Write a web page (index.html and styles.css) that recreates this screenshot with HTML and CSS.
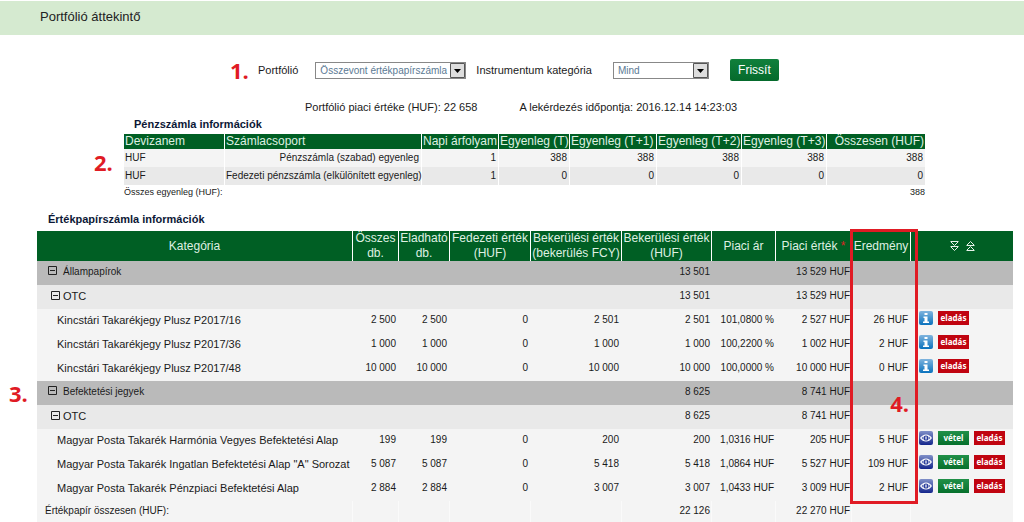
FILE: index.html
```
<!DOCTYPE html>
<html lang="hu">
<head>
<meta charset="utf-8">
<title>Portfólió áttekintő</title>
<link rel="stylesheet" href="styles.css">
</head>
<body>
<svg class="defs" aria-hidden="true">
  <defs>
    <linearGradient id="sky" x1="0" y1="0" x2="0" y2="1"><stop offset="0" stop-color="#7fb4de"/><stop offset="1" stop-color="#0a72bd"/></linearGradient>
    <linearGradient id="navy" x1="0" y1="0" x2="0" y2="1"><stop offset="0" stop-color="#8090c8"/><stop offset="1" stop-color="#14268c"/></linearGradient>
    <symbol id="info" viewBox="0 0 14 14"><rect width="14" height="14" rx="2" fill="url(#sky)"/><path d="M5.500 2h3v2h-3zM4.500 5.500h4v5h1.500v1.500h-6v-1.500h1.500v-3.500h-1z" fill="#fff"/></symbol>
    <symbol id="eye" viewBox="0 0 14 14"><rect width="14" height="14" rx="2" fill="url(#navy)"/><path d="M1 7q2.500-3.500 6-3.500T13 7q-2.500 3.500-6 3.500T1 7z" fill="#fff"/><circle cx="7" cy="7" r="2.600" fill="#2c3f9c"/><path d="M6.400 5.500h1.200v3h-1.200z" fill="#fff"/><path d="M2.500 7l1.500-1.500v3zM11.500 7l-1.500-1.500v3z" fill="#6474b8"/></symbol>
    <symbol id="minus" viewBox="0 0 9 9"><path d="M.5.5h8v8h-8zM2 4.500h5" fill="none" stroke="#222"/></symbol>
    <symbol id="down" viewBox="0 0 9 10"><path d="M.5.500h8M1 1l3.500 3.500L8 1M.5 5.500h8M1 6l3.500 3.500L8 6" fill="none" stroke="#e8f3ea"/></symbol>
  </defs>
</svg>
<header class="page-head"><h1>Portfólió áttekintő</h1></header>
<main>
  <form class="filters">
    <span class="mark">1.</span>
    <label for="pf">Portfólió</label>
    <span class="pick pick-a"><select id="pf"><option>Összevont értékpapírszámla</option></select><svg viewBox="0 0 15 15"><path d="M.5.500h14v14H.5z" fill="#ddd" stroke="#555"/><path d="M4 6h7l-3.500 4z" fill="#000"/></svg></span>
    <label for="cat">Instrumentum kategória</label>
    <span class="pick pick-b"><select id="cat"><option>Mind</option></select><svg viewBox="0 0 15 15"><path d="M.5.500h14v14H.5z" fill="#ddd" stroke="#555"/><path d="M4 6h7l-3.500 4z" fill="#000"/></svg></span>
    <button type="button" class="refresh">Frissít</button>
  </form>
  <p class="summary"><span>Portfólió piaci értéke (HUF): 22 658</span><span>A lekérdezés időpontja: 2016.12.14 14:23:03</span></p>

  <section class="cash">
    <h2>Pénzszámla információk</h2>
    <span class="mark mark-2">2.</span>
    <table>
      <colgroup><col class="c100"><col><col class="c77"><col class="c71"><col class="c87"><col class="c85"><col class="c85"><col class="c99"></colgroup>
      <thead><tr><th>Devizanem</th><th>Számlacsoport</th><th>Napi árfolyam</th><th>Egyenleg (T)</th><th>Egyenleg (T+1)</th><th>Egyenleg (T+2)</th><th>Egyenleg (T+3)</th><th class="right">Összesen (HUF)</th></tr></thead>
      <tbody>
        <tr><td>HUF</td><td>Pénzszámla (szabad) egyenleg</td><td>1</td><td>388</td><td>388</td><td>388</td><td>388</td><td>388</td></tr>
        <tr class="alt"><td>HUF</td><td>Fedezeti pénzszámla (elkülönített egyenleg)</td><td>1</td><td>0</td><td>0</td><td>0</td><td>0</td><td>0</td></tr>
      </tbody>
      <tfoot><tr><td colspan="7">Összes egyenleg (HUF):</td><td>388</td></tr></tfoot>
    </table>
  </section>

  <section class="stock">
    <h2>Értékpapírszámla információk</h2>
    <span class="mark mark-3">3.</span>
    <div class="grid">
    <table>
      <colgroup><col><col class="c46"><col class="c51"><col class="c81"><col class="c91"><col class="c90"><col class="c64"><col class="c76"><col class="c59"><col class="c103"></colgroup>
      <thead><tr><th>Kategória</th><th>Összes<br>db.</th><th>Eladható<br>db.</th><th>Fedezeti érték<br>(HUF)</th><th>Bekerülési érték<br>(bekerülés FCY)</th><th>Bekerülési érték<br>(HUF)</th><th>Piaci ár</th><th>Piaci érték <span class="star">*</span></th><th>Eredmény</th><th><span class="sorts"><svg><use href="#down"/></svg><svg class="up"><use href="#down"/></svg></span></th></tr></thead>
      <tbody>
        <tr class="group"><td><button type="button" aria-label="Állampapírok bezárása"><svg><use href="#minus"/></svg></button>Állampapírok</td><td></td><td></td><td></td><td></td><td>13 501</td><td></td><td>13 529 HUF</td><td></td><td></td></tr>
        <tr class="sub"><td><button type="button" aria-label="OTC bezárása"><svg><use href="#minus"/></svg></button>OTC</td><td></td><td></td><td></td><td></td><td>13 501</td><td></td><td>13 529 HUF</td><td></td><td></td></tr>
        <tr><td>Kincstári Takarékjegy Plusz P2017/16</td><td>2 500</td><td>2 500</td><td>0</td><td>2 501</td><td>2 501</td><td>101,0800 %</td><td>2 527 HUF</td><td>26 HUF</td><td><div class="acts"><button type="button" class="ico" aria-label="Információ"><svg><use href="#info"/></svg></button><button type="button" class="sell">eladás</button></div></td></tr>
        <tr><td>Kincstári Takarékjegy Plusz P2017/36</td><td>1 000</td><td>1 000</td><td>0</td><td>1 000</td><td>1 000</td><td>100,2200 %</td><td>1 002 HUF</td><td>2 HUF</td><td><div class="acts"><button type="button" class="ico" aria-label="Információ"><svg><use href="#info"/></svg></button><button type="button" class="sell">eladás</button></div></td></tr>
        <tr><td>Kincstári Takarékjegy Plusz P2017/48</td><td>10 000</td><td>10 000</td><td>0</td><td>10 000</td><td>10 000</td><td>100,0000 %</td><td>10 000 HUF</td><td>0 HUF</td><td><div class="acts"><button type="button" class="ico" aria-label="Információ"><svg><use href="#info"/></svg></button><button type="button" class="sell">eladás</button></div></td></tr>
        <tr class="group"><td><button type="button" aria-label="Befektetési jegyek bezárása"><svg><use href="#minus"/></svg></button>Befektetési jegyek</td><td></td><td></td><td></td><td></td><td>8 625</td><td></td><td>8 741 HUF</td><td></td><td></td></tr>
        <tr class="sub"><td><button type="button" aria-label="OTC bezárása"><svg><use href="#minus"/></svg></button>OTC</td><td></td><td></td><td></td><td></td><td>8 625</td><td></td><td>8 741 HUF</td><td></td><td></td></tr>
        <tr><td>Magyar Posta Takarék Harmónia Vegyes Befektetési Alap</td><td>199</td><td>199</td><td>0</td><td>200</td><td>200</td><td>1,0316 HUF</td><td>205 HUF</td><td>5 HUF</td><td><div class="acts"><button type="button" class="ico" aria-label="Megtekintés"><svg><use href="#eye"/></svg></button><button type="button" class="buy">vétel</button><button type="button" class="sell">eladás</button></div></td></tr>
        <tr><td>Magyar Posta Takarék Ingatlan Befektetési Alap "A" Sorozat</td><td>5 087</td><td>5 087</td><td>0</td><td>5 418</td><td>5 418</td><td>1,0864 HUF</td><td>5 527 HUF</td><td>109 HUF</td><td><div class="acts"><button type="button" class="ico" aria-label="Megtekintés"><svg><use href="#eye"/></svg></button><button type="button" class="buy">vétel</button><button type="button" class="sell">eladás</button></div></td></tr>
        <tr><td>Magyar Posta Takarék Pénzpiaci Befektetési Alap</td><td>2 884</td><td>2 884</td><td>0</td><td>3 007</td><td>3 007</td><td>1,0433 HUF</td><td>3 009 HUF</td><td>2 HUF</td><td><div class="acts"><button type="button" class="ico" aria-label="Megtekintés"><svg><use href="#eye"/></svg></button><button type="button" class="buy">vétel</button><button type="button" class="sell">eladás</button></div></td></tr>
      </tbody>
      <tfoot><tr><td>Értékpapír összesen (HUF):</td><td></td><td></td><td></td><td></td><td>22 126</td><td></td><td>22 270 HUF</td><td></td><td></td></tr></tfoot>
    </table>
    <div class="frame"><span class="mark">4.</span></div>
    </div>
  </section>
</main>
</body>
</html>
```
FILE: styles.css
```
* { box-sizing: border-box; }
body { margin: 0; background: #fff; color: #1a1a1a; font: 11px/16px "Liberation Sans", Arial, sans-serif; }
.defs { position: absolute; width: 0; height: 0; }
button { border: 0; padding: 0; margin: 0; background: none; font: inherit; cursor: pointer; }
svg { display: block; }
h1, h2, p { margin: 0; }

.page-head { margin-top: 1px; height: 34px; padding: 8px 40px; background: #d5ead0; }
h1 { font-size: 13px; line-height: 16px; font-weight: normal; color: #222; }
h2 { font-size: 11px; line-height: 14px; color: #0c1836; }
.mark { color: #e01b24; font: bold 22px/24px "Open Sans", sans-serif; }

.filters { display: flex; align-items: center; height: 24px; margin: 23px 0 0 230px; }
.filters .mark { width: 28px; }
.pick { display: grid; align-items: center; }
.pick-a { width: 151px; margin: 0 10px 0 17px; }
.pick-b { width: 96px; margin: 0 21px; }
.pick select, .pick svg { grid-area: 1 / 1; }
.pick svg { width: 15px; height: 15px; margin-right: 1px; justify-self: end; pointer-events: none; }
.pick select { appearance: none; width: 100%; height: 17px; padding: 0 16px 0 4px; border: 1px solid #888; border-radius: 0; background: #fff; color: #5b7a94; font: 10px/15px "Liberation Sans", Arial, sans-serif; }
.refresh { width: 49px; height: 22px; border-radius: 2px; background: linear-gradient(#10803c, #056a2c); color: #fff; font-size: 12px; }

.summary { display: flex; gap: 42px; margin: 17px 0 0 305px; }

table { width: 100%; table-layout: fixed; border-collapse: separate; border-spacing: 0; }
.c46 { width: 46px; }
.c51 { width: 51px; }
.c59 { width: 59px; }
.c64 { width: 64px; }
.c71 { width: 71px; }
.c76 { width: 76px; }
.c77 { width: 77px; }
.c81 { width: 81px; }
.c85 { width: 85px; }
.c87 { width: 87px; }
.c90 { width: 90px; }
.c91 { width: 91px; }
.c99 { width: 99px; }
.c100 { width: 100px; }
.c103 { width: 103px; }
th { background: #005f24; color: #dff0e2; font-weight: normal; white-space: nowrap; }
th, td { padding: 0; }
th + th { border-left: 1px solid #fff; }
td { text-align: right; white-space: nowrap; }
td:first-child { text-align: left; }

.cash { position: relative; margin: 0 99px 0 124px; }
.cash h2 { padding-left: 10px; line-height: 19px; }
.cash th { height: 15px; padding: 0 1px; font-size: 12px; line-height: 15px; text-align: left; }
.cash th.right { text-align: right; }
.cash td { height: 18px; padding: 0 2px 0 1px; font-size: 10px; line-height: 14px; }
.cash tbody td { background: #f4f4f4; }
.cash .alt td { background: #e9e9e9; }
.cash td + td { border-left: 1px solid #fff; }
.cash tfoot td { height: 14px; padding: 0; font-size: 9px; }
.mark-2 { position: absolute; left: -30px; top: 35px; }

.stock { position: relative; margin: 13px 11px 0 37px; }
.stock h2 { padding: 0 0 5px 11px; }
.stock th { height: 30px; font-size: 12px; line-height: 15px; }
.stock td { height: 24px; padding: 0 1px 2px; background: #f4f4f4; font-size: 10px; line-height: 14px; }
.stock td:nth-child(n+2):nth-child(-n+5) { padding-right: 2px; }
.stock td:nth-child(9) { padding-right: 2px; }
.stock tbody td:first-child { padding-left: 20px; font-size: 11px; }
.stock .group td { background: #bababa; }
.stock .sub td { background: #e9e9e9; }
.stock tbody .group td:first-child { padding-left: 11px; font-size: 10px; }
.stock tbody .sub td:first-child { padding-left: 14px; }
.group svg, .sub svg { width: 9px; height: 9px; }
.group button { margin-right: 6px; }
.sub button { margin-right: 3px; }
.stock tfoot td { height: 21px; border-left: 1px solid #fafafa; }
.stock tfoot td:first-child { padding-left: 8px; border: 0; }
.stock tbody td:last-child { padding: 0 1px; }
.star { color: #d22; }
.sorts { display: flex; justify-content: center; gap: 7px; }
.sorts svg { width: 9px; height: 10px; }
.sorts .up { transform: rotate(180deg); }
.acts { display: flex; gap: 5px; align-items: center; height: 24px; padding: 0 0 6px 8px; }
.ico svg { width: 14px; height: 14px; }
.buy, .sell { width: 31px; height: 14px; color: #fff; font: bold 8px/12px "Noto Sans", sans-serif; }
.buy { background: linear-gradient(#219048, #06702c); }
.sell { background: #c00410; }

.mark-3 { position: absolute; left: -28px; top: 169px; }
.grid { position: relative; }
.frame { position: absolute; top: -2px; right: 95px; width: 68px; height: 275px; border: 3px solid #e01b24; pointer-events: none; }
.frame .mark { position: absolute; right: 6px; bottom: 86px; }
```
